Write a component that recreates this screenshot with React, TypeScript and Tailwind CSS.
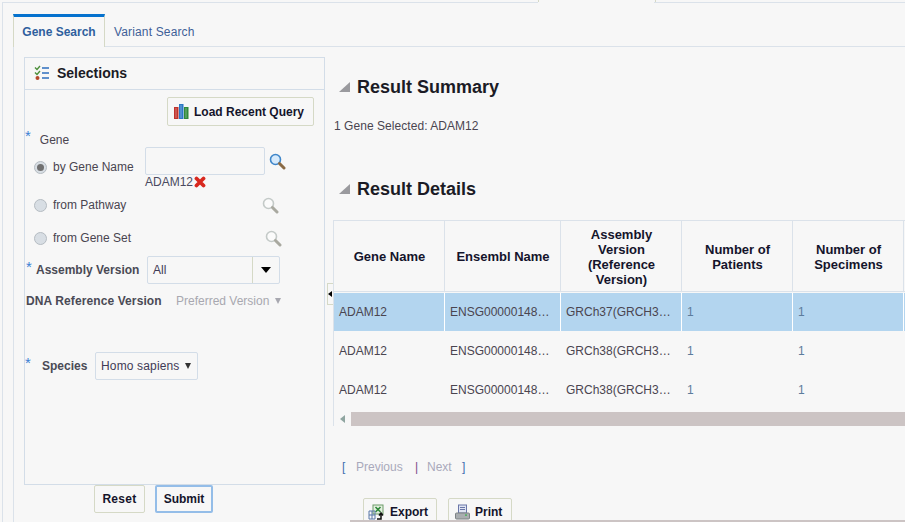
import type { ReactNode } from "react";

const rows = [
  { assembly: "GRCh37(GRCH3…", selected: true },
  { assembly: "GRCh38(GRCH3…", selected: false },
  { assembly: "GRCh38(GRCH3…", selected: false },
];

function Star() {
  return <span className="text-[15px] leading-none text-[#3b7fd4]">*</span>;
}

function Radio({ checked }: { checked?: boolean }) {
  return (
    <span className="flex h-[13px] w-[13px] shrink-0 items-center justify-center rounded-full border border-[#b5bcc2] bg-[#d8dee4]">
      {checked && <span className="h-[7px] w-[7px] rounded-full bg-[#707070]" />}
    </span>
  );
}

function SearchIcon({ faded }: { faded?: boolean }) {
  return (
    <svg width="17" height="17" viewBox="0 0 17 17" className="shrink-0">
      <circle cx="6.5" cy="6.5" r="5" fill={faded ? "#fbfbfb" : "#d6eafc"} stroke={faded ? "#c4cac8" : "#3f86c9"} strokeWidth="1.6" />
      <path d="M10.5 10.5 L15 15" stroke={faded ? "#a9a9a0" : "#8a6a45"} strokeWidth="3" strokeLinecap="round" />
    </svg>
  );
}

function Triangle() {
  return (
    <svg width="11" height="10" viewBox="0 0 11 10" className="shrink-0">
      <path d="M11 0 V10 H0 Z" fill="#9a9a9e" />
    </svg>
  );
}

function HeaderCell({ width, children }: { width: string; children: ReactNode }) {
  return (
    <div className={`flex shrink-0 items-center justify-center border-r border-[#dbe2ea] pt-px pl-px text-center text-[13px] leading-[15px] font-bold text-[#14142b] ${width}`}>
      <span>{children}</span>
    </div>
  );
}

function Cell({ width, blue, children }: { width: string; blue?: boolean; children: ReactNode }) {
  return (
    <div className={`flex shrink-0 items-center border-r text-xs ${blue ? "pl-[5px] text-[#5c7c9c]" : "pl-[5px] text-[#4a4550]"} ${width}`}>
      {children}
    </div>
  );
}

export default function App() {
  return (
    <div className="h-[522px] w-[905px] overflow-hidden bg-[#f7f7f7] pl-[2px] font-['Liberation_Sans',Arial,sans-serif] text-xs text-[#4a4550]">
      {/* edges of the outer tab above the frame */}
      <div className="ml-[536px] h-[2px] w-[118px] border-x border-[#d5d9c6]" />

      {/* page frame, with the notch of the outer tab */}
      <div className="flex h-[520px] flex-col border-l border-[#dbe2ea]">
        <div className="flex h-px shrink-0">
          <div className="w-[535px] bg-[#dbe2ea]" />
          <div className="w-[116px]" />
          <div className="flex-1 bg-[#dbe2ea]" />
        </div>

        {/* tab bar */}
        <div className="ml-[10px] mt-[11px] flex h-[33px] shrink-0 border-b border-[#dbe2ea]">
          <div className="-mb-px flex w-[92px] items-center justify-center border-x border-t-[3px] border-x-[#d5d9c6] border-t-[#0572ce] bg-[#f7f7f7] pb-px text-xs font-bold text-[#2f5f9e]">
            Gene Search
          </div>
          <div className="flex items-center pl-[9px] pt-[4px] text-xs tracking-[0.15px] text-[#3f5f97]">Variant Search</div>
        </div>

        <div className="ml-[10px] flex min-h-0 flex-1 border-l border-[#dbe2ea]">
          {/* left column */}
          <div className="ml-[10px] flex w-[301px] shrink-0 flex-col pt-[10px]">
            <div className="h-[428px] border border-[#d3dde8]">
              <div className="flex h-[32px] items-center gap-[7px] border-b border-[#d3dde8] pb-[2px] pl-[9px]">
                <svg width="16" height="16" viewBox="0 0 16 16">
                  <path d="M1 2.5 L3 4.5 L6 1" fill="none" stroke="#4c8f3a" strokeWidth="1.4" />
                  <path d="M1 7.5 L3 9.5 L6 6" fill="none" stroke="#4c8f3a" strokeWidth="1.4" />
                  <circle cx="3.5" cy="13" r="2" fill="#b5482a" />
                  <path d="M8 3 H15 M8 8 H15 M8 13 H15" stroke="#2f6fbf" strokeWidth="1.6" />
                </svg>
                <span className="text-sm font-bold text-[#1b1b25]">Selections</span>
              </div>

              <div className="flex justify-end pt-[7px] pr-[10px]">
                <button className="flex h-[29px] w-[147px] items-center gap-[5px] rounded-[2px] border border-[#d5d9c6] pl-[6px] text-xs font-bold text-[#14142b]">
                  <svg width="15" height="15" viewBox="0 0 15 15">
                    <rect x="0" y="3" width="4.5" height="12" fill="#c0332d" />
                    <rect x="5" y="0" width="4.5" height="15" fill="#2b78c5" />
                    <rect x="10" y="3" width="4.5" height="12" fill="#2f8a3a" />
                    <path d="M2 4 V14 M7 1 V14 M12 4 V14" stroke="#ffffff" strokeOpacity="0.35" />
                  </svg>
                  Load Recent Query
                </button>
              </div>

              <div className="flex h-[20px] items-start pt-[5px]">
                <span className="-mt-[3px]"><Star /></span>
                <span className="ml-[9px] pt-px">Gene</span>
              </div>

              <div className="flex items-start pl-[9px]">
                <div className="flex h-[28px] w-[111px] shrink-0 items-center gap-[6px] pt-[14px]">
                  <Radio checked />
                  <span>by Gene Name</span>
                </div>
                <div className="w-[120px] shrink-0 pt-px">
                  <div className="h-[28px] rounded-[2px] border border-[#d3dde8] bg-[#f7f7f7]" />
                  <div className="flex h-[14px] items-center text-[#4a4a60]">
                    ADAM12
                    <svg width="12" height="12" viewBox="0 0 12 12" className="ml-px">
                      <path d="M2.5 2.5 L9.5 9.5 M9.5 2.5 L2.5 9.5" stroke="#d8281f" strokeWidth="3.8" strokeLinecap="round" />
                    </svg>
                  </div>
                </div>
                <div className="pt-[7px] pl-[4px]">
                  <SearchIcon />
                </div>
              </div>

              <div className="mt-[3px] flex h-[26px] items-center pl-[9px]">
                <div className="flex w-[228px] items-center gap-[6px]">
                  <Radio />
                  <span>from Pathway</span>
                </div>
                <SearchIcon faded />
              </div>

              <div className="mt-[7px] flex h-[26px] items-center pl-[9px]">
                <div className="flex w-[231px] items-center gap-[6px]">
                  <Radio />
                  <span>from Gene Set</span>
                </div>
                <SearchIcon faded />
              </div>

              <div className="mt-[5px] flex h-[28px] items-center pl-px">
                <span className="-mt-[5px] w-[10px]"><Star /></span>
                <span className="w-[111px] font-bold text-[#4a4a55]">Assembly Version</span>
                <div className="flex h-[28px] w-[133px] items-stretch rounded-[2px] border border-[#d3dde8]">
                  <span className="flex flex-1 items-center pl-[5px] text-[#3f3a55]">All</span>
                  <span className="flex w-[27px] items-center justify-center border-l border-[#d5d9c6]">
                    <span className="h-0 w-0 border-x-[5px] border-t-[6px] border-x-transparent border-t-black" />
                  </span>
                </div>
              </div>

              <div className="mt-[9px] flex h-[15px] items-center pl-px">
                <span className="w-[150px] font-bold tracking-[0.1px] text-[#4a4a55]">DNA Reference Version</span>
                <span className="text-[#a8a8b0]">Preferred Version</span>
                <span className="ml-[6px] h-0 w-0 border-x-[3.5px] border-t-[6px] border-x-transparent border-t-[#a8a8b0]" />
              </div>

              <div className="mt-[44px] flex h-[28px] items-center">
                <span className="-mt-[5px] w-[17px]"><Star /></span>
                <span className="w-[53px] font-bold text-[#4a4a55]">Species</span>
                <div className="flex h-[28px] w-[103px] items-center gap-[5px] rounded-[2px] border border-[#d3dde8] pl-[5px] tracking-[0.15px] text-[#3f3a55]">
                  Homo sapiens
                  <span className="h-0 w-0 border-x-[3.5px] border-t-[6px] border-x-transparent border-t-[#333]" />
                </div>
              </div>
            </div>

            <div className="flex h-[28px] gap-[10px] pl-[70px]">
              <button className="h-[28px] w-[51px] rounded-[2px] border border-[#d5d9c6] text-xs font-bold tracking-[0.3px] text-[#14142b]">Reset</button>
              <button className="h-[28px] w-[58px] rounded-[2px] border-2 border-[#94bde8] text-xs font-bold text-[#14142b]">Submit</button>
            </div>
          </div>

          {/* splitter */}
          <div className="ml-[2px] w-[6px] shrink-0 pt-[236px]">
            <div className="flex h-[22px] w-[7px] items-center justify-start border border-[#d5d9c6]">
              <span className="h-0 w-0 border-y-[3px] border-r-[4px] border-y-transparent border-r-black" />
            </div>
          </div>

          {/* results */}
          <div className="flex min-w-0 flex-1 flex-col overflow-hidden">
            <div className="h-[473px] shrink-0 overflow-hidden">
              <div className="mt-[26px] flex h-[24px] items-center gap-[7px] pt-[4px] pl-[6px]">
                <Triangle />
                <span className="text-lg leading-none font-bold text-[#1b1b25]">Result Summary</span>
              </div>
              <div className="mt-[22px] h-[14px] pl-px leading-[14px] tracking-[0.05px]">1 Gene Selected: ADAM12</div>
              <div className="mt-[42px] flex h-[24px] items-center gap-[7px] pt-[4px] pl-[6px]">
                <Triangle />
                <span className="text-lg leading-none font-bold text-[#1b1b25]">Result Details</span>
              </div>

              <div className="mt-[21px] h-[206px] w-[580px] border-t border-l border-[#dbe2ea]">
                <div className="flex h-[71px] border-b border-[#dbe2ea]">
                  <HeaderCell width="w-[111px]">Gene Name</HeaderCell>
                  <HeaderCell width="w-[116px]">Ensembl Name</HeaderCell>
                  <HeaderCell width="w-[121px]">
                    Assembly
                    <br />
                    Version
                    <br />
                    (Reference
                    <br />
                    Version)
                  </HeaderCell>
                  <HeaderCell width="w-[111px]">
                    Number of
                    <br />
                    Patients
                  </HeaderCell>
                  <HeaderCell width="w-[111px]">
                    Number of
                    <br />
                    Specimens
                  </HeaderCell>
                </div>
                {rows.map((row, i) => (
                  <div key={i} className={`mt-px flex h-[38px] ${row.selected ? "bg-[#b3d5ef]" : ""}`}>
                    <Cell width={`w-[111px] ${row.selected ? "border-white" : "border-transparent"}`}>ADAM12</Cell>
                    <Cell width={`w-[116px] ${row.selected ? "border-white" : "border-transparent"}`}>ENSG00000148…</Cell>
                    <Cell width={`w-[121px] ${row.selected ? "border-white" : "border-transparent"}`}>{row.assembly}</Cell>
                    <Cell blue width={`w-[111px] ${row.selected ? "border-white" : "border-transparent"}`}>1</Cell>
                    <Cell blue width={`w-[111px] ${row.selected ? "border-white" : "border-transparent"}`}>1</Cell>
                  </div>
                ))}
                <div className="mt-[3px] flex h-[14px] items-center">
                  <span className="flex w-[17px] justify-center">
                    <span className="h-0 w-0 border-y-[4px] border-r-[5px] border-y-transparent border-r-[#8fa5a0]" />
                  </span>
                  <div className="h-[14px] flex-1 bg-[#ccc4c4]" />
                </div>
              </div>

              <div className="mt-[34px] flex h-[14px] items-center pl-[9px]">
                <span className="w-[14px] text-[#3f6fb0]">[</span>
                <span className="w-[59px] text-[#a9a9bb]">Previous</span>
                <span className="w-[12px] text-[#7a4a8a]">|</span>
                <span className="w-[35px] text-[#a9a9bb]">Next</span>
                <span className="text-[#3f6fb0]">]</span>
              </div>

              <div className="mt-[24px] flex gap-[11px] pl-[30px]">
                <button className="flex h-[28px] w-[74px] items-start gap-[5px] rounded-[2px] border border-[#d5d9c6] pt-[5px] pl-[4px] text-xs font-bold text-[#14142b]">
                  <svg width="17" height="16" viewBox="0 0 17 16">
                    <rect x="5" y="1" width="10" height="9" fill="#e4efe0" stroke="#6c9b68" />
                    <path d="M7.5 3 L12.5 8 M12.5 3 L7.5 8" stroke="#2f8a3a" strokeWidth="1.6" />
                    <path d="M1 7 H7 V15 H1 Z M1 11 H7 M4 7 V15" fill="none" stroke="#5a78a8" />
                    <path d="M9 15 H13 V10 M11 11.5 L13 9 L15 11.5" fill="none" stroke="#111" strokeWidth="1.5" />
                  </svg>
                  Export
                </button>
                <button className="flex h-[28px] w-[64px] items-start gap-[5px] rounded-[2px] border border-[#d5d9c6] pt-[5px] pl-[6px] text-xs font-bold text-[#14142b]">
                  <svg width="15" height="16" viewBox="0 0 15 16">
                    <rect x="3.5" y="1" width="8" height="8" fill="#dfe4f2" stroke="#6a76a8" />
                    <path d="M5 3.5 H10 M5 5.5 H10" stroke="#6a76a8" />
                    <rect x="0.5" y="9" width="14" height="6" rx="1" fill="#a9adb0" stroke="#7d8285" />
                    <rect x="10" y="10.5" width="2" height="1.2" fill="#35b04a" />
                  </svg>
                  Print
                </button>
              </div>
            </div>

            {/* page scrollbar, cut by the window edge */}
            <div className="ml-[17px] h-[2px] shrink-0 bg-[#ccc4c4]" />
          </div>
        </div>
      </div>
    </div>
  );
}
